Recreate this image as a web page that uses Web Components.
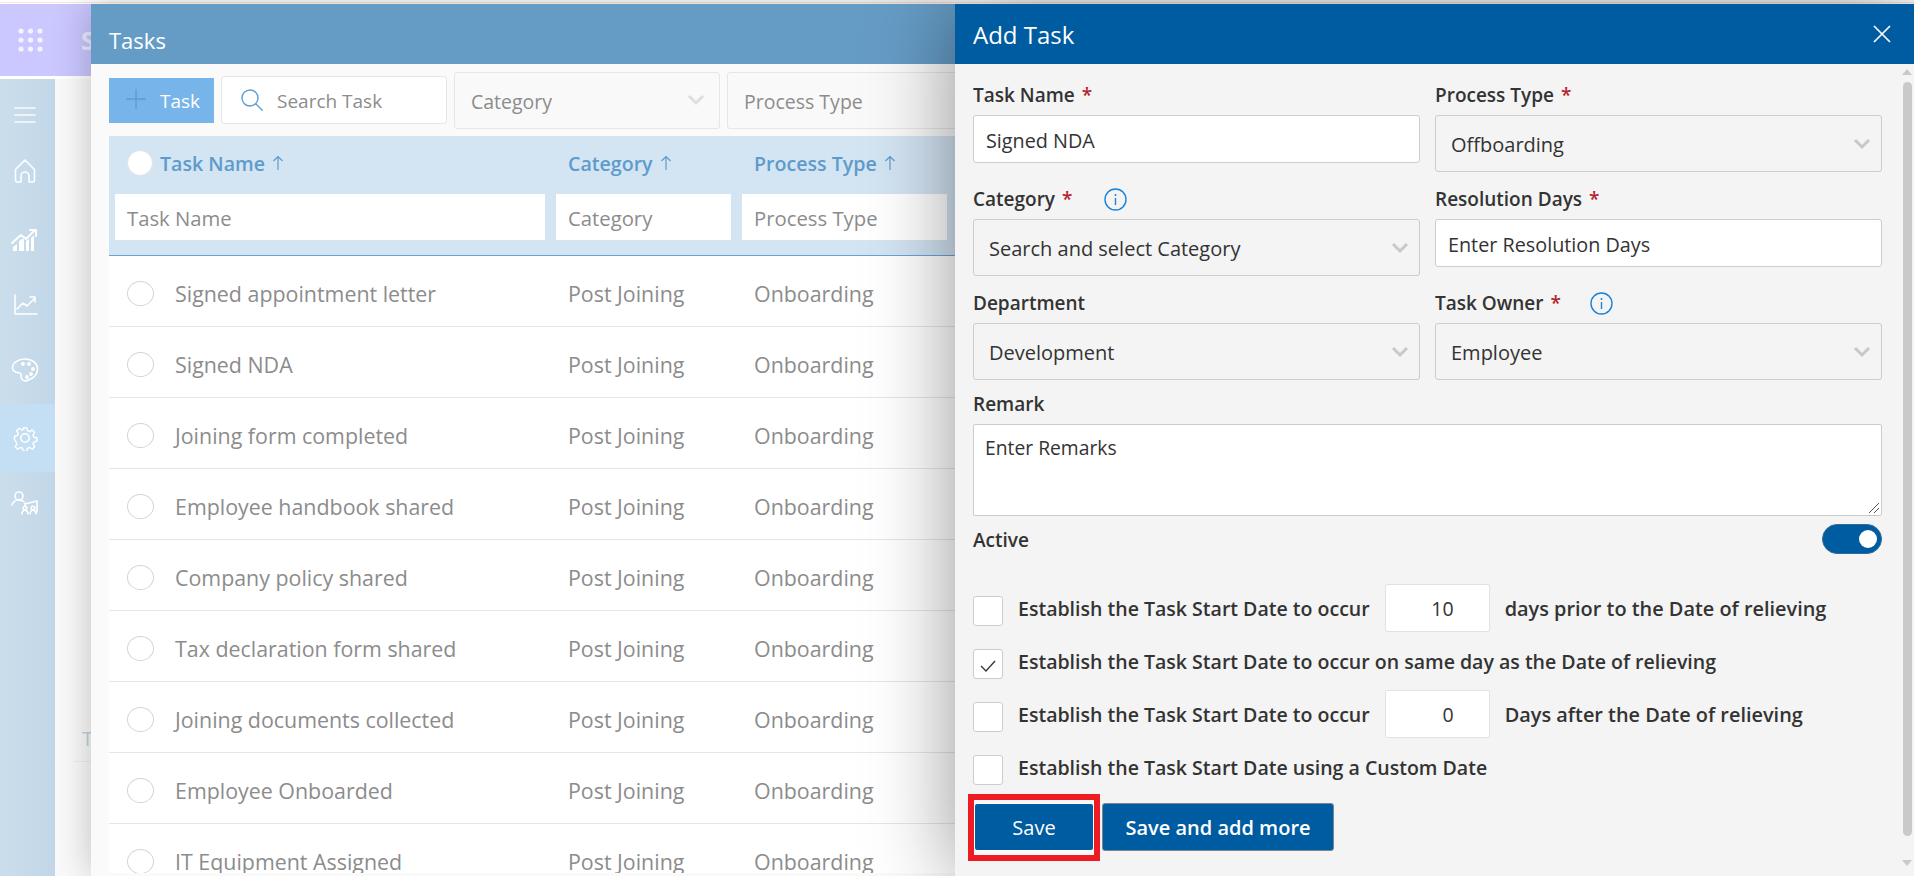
<!DOCTYPE html>
<html lang="en"><head><meta charset="utf-8"><title>Tasks</title>
<style>
html,body{margin:0;height:100%;overflow:hidden;background:#fff}
body{font-family:"Open Sans","Noto Sans",sans-serif;font-size:19px;color:#333}
app-shell{--cols:430px 175px 205px}
</style></head><body>
<app-shell>
  <app-topbar slot="top">S</app-topbar>
  <app-sidebar slot="side"></app-sidebar>
  <tasks-panel slot="panel">
    <task-row category="Post Joining" type="Onboarding">Signed appointment letter</task-row>
    <task-row category="Post Joining" type="Onboarding">Signed NDA</task-row>
    <task-row category="Post Joining" type="Onboarding">Joining form completed</task-row>
    <task-row category="Post Joining" type="Onboarding">Employee handbook shared</task-row>
    <task-row category="Post Joining" type="Onboarding">Company policy shared</task-row>
    <task-row category="Post Joining" type="Onboarding">Tax declaration form shared</task-row>
    <task-row category="Post Joining" type="Onboarding">Joining documents collected</task-row>
    <task-row category="Post Joining" type="Onboarding">Employee Onboarded</task-row>
    <task-row category="Post Joining" type="Onboarding">IT Equipment Assigned</task-row>
  </tasks-panel>
  <task-drawer slot="drawer"></task-drawer>
</app-shell>
<script>
function def(name, css, html, init){
  customElements.define(name, class extends HTMLElement{
    constructor(){super();const r=this.attachShadow({mode:'open'});
      const get=(a,d='')=>this.getAttribute(a)??d;
      r.innerHTML='<style>'+css+'</style>'+(typeof html==='function'?html(get):html);
      if(init)init(r,this);}
  });
}
const chev='<svg width="18" height="12" viewBox="0 0 18 12"><path d="M2 2l7 7 7-7" fill="none" stroke="currentColor" stroke-width="3"/></svg>';

def('app-shell',`
 :host{display:block;width:1914px;height:876px;position:relative;overflow:hidden;background:#fff}
 .strip{height:1px;margin:2px 0 1px;background:#fce8d8}
 .below{display:flex;height:797px;margin-top:3px}
 .content{flex:1;background:#fafafa;padding:0 0 0 19px;color:#c3d3e0}
 .t{display:block;margin:647px 0 0 8px;font-size:20px;line-height:26px}
 .ln{height:1px;background:#eee;margin-top:9px}
`,`<div class="strip"></div><slot name="top"></slot>
 <div class="below"><slot name="side"></slot><div class="content"><span class="t">T</span><div class="ln"></div></div></div>
 <slot name="panel"></slot><slot name="drawer"></slot>`);

def('app-topbar',`
 :host{display:flex;align-items:center;height:72px;background:linear-gradient(90deg,#cbc7ff,#c6c2fa);color:#eceaff;font-size:25px;font-weight:700}
 svg{margin-left:18px;flex:none}
 span{margin-left:37px}
`,`<svg width="26" height="26" viewBox="0 0 26 26" fill="#f3f2ff">
 ${[3,12.5,22].map(x=>[4,13,22].map(y=>`<circle cx="${x}" cy="${y}" r="2.6"/>`).join('')).join('')}</svg><span><slot></slot></span>`);

def('app-sidebar',`
 :host{display:flex;flex-direction:column;width:55px;flex:none;background:linear-gradient(90deg,#cbdeec,#c1d6e7);height:797px;box-sizing:border-box}
 .i{display:flex;align-items:center;justify-content:center;flex:none;height:67px;padding-right:5px;box-sizing:border-box}
 .i svg{fill:none;stroke:#fff;stroke-width:1.6;stroke-linecap:round;stroke-linejoin:round}
 .on{background:#c4dff3;height:68px}
`,`
 <div class="i" style="height:72px"><svg width="24" height="18" viewBox="0 0 24 18"><path d="M2 2h20M2 9h20M2 16h20" stroke-opacity=".9"/></svg></div>
 <div class="i" style="height:40px"><svg width="24" height="26" viewBox="0 0 24 26"><path d="M2.5 11.5L12 2l9.500 9.500V22a2 2 0 0 1-2 2H16v-6a4 4 0 0 0-8 0v6H4.500a2 2 0 0 1-2-2z"/></svg></div>
 <div class="i" style="height:97px"><svg width="28" height="24" viewBox="0 0 28 24"><path d="M1 15L10 7l5 4 8-8M19 2h6v6" stroke-width="2"/><path d="M2 23v-4l4-3v7zM8 23V13l4-2.500 1 1V23zM15 23V13l3-2v12zM20 23V10l3-3v16z" fill="#fff" stroke="none"/></svg></div>
 <div class="i" style="height:34px"><svg width="25" height="22" viewBox="0 0 25 22"><path d="M2 1v19h22"/><path d="M4 15l6-6 4 3 8-8M17 3h5v5"/></svg></div>
 <div class="i" style="height:82px;padding-top:14px"><svg width="28" height="26" viewBox="0 0 28 26"><path d="M14 2C7 2 1.500 6 1.500 11c0 4 4 4.500 7 5 3 .6 1 3 2 5.500 1 2.500 4 3 7 1.500 5.500-2 9-6 9-11C26.500 6 21 2 14 2z"/><circle cx="12" cy="7" r="1.100" fill="#fff"/><circle cx="18" cy="7" r="1.100" fill="#fff"/><circle cx="22" cy="12" r="1.100" fill="#fff"/><circle cx="20" cy="17" r="1.100" fill="#fff"/><circle cx="16" cy="20" r="1.100" fill="#fff"/></svg></div>
 <div class="i on"><svg width="26" height="26" viewBox="0 0 26 26"><circle cx="13" cy="13" r="4.200"/><path d="M11 1.500h4l.7 3.400 2.300 1 3-1.900 2.800 2.800-1.900 3 1 2.300 3.300.7v3.800l-3.300.7-1 2.300 1.900 3-2.800 2.800-3-1.900-2.300 1-.7 3.300h-4l-.7-3.300-2.300-1-3 1.900-2.800-2.800 1.900-3-1-2.300L1.300 15v-4l3.300-.7 1-2.300-1.900-3 2.800-2.800 3 1.900 2.300-1z" transform="translate(1.300 1.300) scale(.9)"/></svg></div>
 <div class="i" style="height:62px"><svg width="28" height="26" viewBox="0 0 28 26"><circle cx="8" cy="6" r="4"/><path d="M1 15c1-3 4-5 7-5 2 0 3 .5 4.500 1.500"/><path d="M14 14l12-3v11M14 13v3M11 24c0-2 1.500-4 3-4s3 2 3 4M19 24c0-2 1.500-4 3-4s3 2 3 4"/><circle cx="14" cy="18" r="1.800"/><circle cx="22" cy="18" r="1.800"/></svg></div>`);

def('sort-head',`
 :host{display:flex;align-items:center;gap:7px;padding-left:var(--pl,0);color:#5e9bca;font-weight:600;font-size:19.6px;line-height:26px;margin-top:-2px}
 svg{flex:none;margin-top:-3px}
`,`<slot></slot><svg width="12" height="16" viewBox="0 0 12 16"><path d="M6 15V1.500M1.500 6L6 1.500 10.500 6" fill="none" stroke="#5e9bca" stroke-width="1.200"/></svg>`);

def('tasks-panel',`
 :host{position:absolute;left:91px;top:4px;width:864px;height:872px;background:#fafafa;box-shadow:0 0 36px rgba(0,0,0,.24);display:flex;flex-direction:column;overflow:visible;color:#8c8c8c}
 header{height:60px;flex:none;background:#659cc6;color:#fff;font-size:22px;display:flex;align-items:center;padding:12px 18px 0;box-sizing:border-box;line-height:1}
 .bar{height:72px;flex:none;display:flex;align-items:center;gap:7px;padding-left:18px;overflow:hidden;font-size:19.5px}
 .bar span{position:relative;top:1px}
 .add{flex:none;width:105px;height:45px;background:#76b4e9;color:#fff;display:flex;align-items:center;box-sizing:border-box;padding-left:17px;gap:14px;font-size:19px}
 .search{flex:none;width:226px;height:48px;box-sizing:border-box;background:#fff;border:1px solid #e6e6e6;border-radius:3px;display:flex;align-items:center;padding-left:19px;gap:14px;font-size:19px}
 .sel{flex:none;height:57px;box-sizing:border-box;border:1px solid #e6e6e6;border-radius:3px;background:#f9f9f9;display:flex;align-items:center;justify-content:space-between;padding:0 14px 0 16px;color:#8c8c8c}
 .sel svg{color:#dedede}
 .table{margin-left:18px;flex:1;min-height:0;display:flex;flex-direction:column;background:#fff;overflow:hidden;margin-bottom:3px}
 .head{flex:none;height:120px;box-sizing:border-box;background:#d3e4f3;border-bottom:1px solid #6ba3d6;padding:0 6px}
 .hr,.fr{display:grid;grid-template-columns:var(--cols);column-gap:11px}
 .hr{height:58px;align-items:center}
 .hn{display:flex;align-items:center;gap:7px;padding-left:12px}
 .dot{width:26px;height:26px;border-radius:50%;background:#fff;border:1px solid #dde4ea;box-sizing:border-box;flex:none;margin-top:-4px}
 .fr{height:46px;font-size:20.3px}
 .f{background:#fff;display:flex;align-items:center;padding:1px 0 0 12px;color:#8c8c8c;box-sizing:border-box}
`,`<header><span>Tasks</span></header>
 <div class="bar">
  <div class="add"><svg width="20" height="20" viewBox="0 0 20 20" style="margin-top:-3px"><path d="M10 0v20M0 10h20" stroke="#5c9dd0" stroke-width="1.400"/></svg><span>Task</span></div>
  <div class="search"><svg width="22" height="22" viewBox="0 0 22 22"><circle cx="9" cy="9" r="8" fill="none" stroke="#5c9fd5" stroke-width="1.400"/><path d="M15 15l6.500 6.500" stroke="#5c9fd5" stroke-width="1.400"/></svg><span>Search Task</span></div>
  <div class="sel" style="width:266px"><span>Category</span>${chev}</div>
  <div class="sel" style="width:300px"><span>Process Type</span></div>
 </div>
 <div class="table">
  <div class="head">
   <div class="hr"><div class="hn"><span class="dot"></span><sort-head>Task Name</sort-head></div><sort-head style="--pl:12px">Category</sort-head><sort-head style="--pl:12px">Process Type</sort-head></div>
   <div class="fr"><div class="f">Task Name</div><div class="f">Category</div><div class="f">Process Type</div></div>
  </div>
  <slot></slot>
 </div>`);

def('task-row',`
 :host{display:grid;grid-template-columns:var(--cols);column-gap:11px;height:71px;flex:none;box-sizing:border-box;padding:5px 6px 0;border-bottom:1px solid #e6e6e6;align-items:center;color:#8c8c8c;background:#fff;font-size:21.4px}
 .n{display:flex;align-items:center;padding-left:12px;gap:21px}
 .c{width:27px;height:25px;border:1px solid #d4d4d4;border-radius:50%;box-sizing:border-box;flex:none}
 .p,.q{padding-left:12px}
`,g=>`<div class="n"><span class="c"></span><span><slot></slot></span></div><div class="p">${g('category')}</div><div class="q">${g('type')}</div>`);

def('field-label',`
 :host{display:flex;align-items:center;height:28px;margin-bottom:6px;font-weight:600;color:#333;font-size:19px;white-space:nowrap}
 .s{color:#b4232e;margin-left:7px;font-size:19px;line-height:1}
 svg{margin-left:var(--gap,22px)}
`,`<span><slot></slot></span><span class="s" id="s"></span><span id="i"></span>`,(r,h)=>{
  if(h.hasAttribute('req')) r.getElementById('s').textContent='*';
  if(h.hasAttribute('info')) r.getElementById('i').innerHTML='<svg width="23" height="23" viewBox="0 0 23 23" style="display:block"><circle cx="11.500" cy="11.500" r="10.500" fill="none" stroke="#1a83d8" stroke-width="1.400"/><path d="M11.500 10v7" stroke="#1a83d8" stroke-width="1.400"/><circle cx="11.500" cy="7" r="1" fill="#1a83d8"/></svg>';
});

def('form-input',`
 :host{display:flex;align-items:center;height:48px;box-sizing:border-box;background:#fff;border:1px solid #ccc;border-radius:3px;padding:2px 0 0 12px;color:#333;font-size:19.8px}
`,`<slot></slot>`);
def('form-select',`
 :host{display:flex;align-items:center;justify-content:space-between;height:57px;box-sizing:border-box;background:#f4f4f4;border:1px solid #ccc;border-radius:3px;padding:0 10px 0 15px;color:#333;font-size:20px}
 span{position:relative;top:1px}
 svg{color:#c8c8c8}
`,`<span><slot></slot></span>${chev}`);

def('date-rule',`
 :host{display:flex;height:53px;color:#333;font-weight:600;white-space:nowrap;font-size:19.55px}
 .b{width:30px;height:30px;box-sizing:border-box;border:1px solid #ccc;border-radius:3px;background:#fff;flex:none;margin-top:11.500px;display:flex;align-items:center;justify-content:center}
 .t{margin-left:15px;line-height:50px}
 .after{margin-left:15px;line-height:50px;font-size:19.9px}
 .num{width:105px;height:48px;box-sizing:border-box;background:#fff;border:1px solid #e2e2e2;border-radius:2px;margin-left:15px;text-align:right;padding-right:35px;line-height:48px;font-weight:400;flex:none}
`,`<span class="b" id="b"></span><span class="t"><slot></slot></span><span id="x" style="display:contents"></span>`,(r,h)=>{
  if(h.hasAttribute('checked')) r.getElementById('b').innerHTML='<svg width="16" height="14" viewBox="0 0 16 14" style="margin-top:4px"><path d="M1 7l5 5L15 2" fill="none" stroke="#333" stroke-width="1.300"/></svg>';
  if(h.hasAttribute('num')) r.getElementById('x').innerHTML=`<span class="num">${h.getAttribute('num')}</span><span class="after">${h.getAttribute('after')}</span>`;
});

def('ui-toggle',`
 :host{display:flex;width:60px;height:30px;box-sizing:border-box;background:#005ca1;border:1px solid #2f6b9b;border-radius:15px;align-items:center;justify-content:flex-end;padding-right:4px}
 i{display:block;width:18px;height:18px;border-radius:50%;background:#fff}
`,`<i></i>`);
def('ui-button',`
 :host{display:flex;align-items:center;justify-content:center;height:48px;box-sizing:border-box;background:#005ca1;color:#fff;border:1px solid #7a8793;border-radius:3px;font-weight:600;font-size:20px}
`,`<slot></slot>`);

def('task-drawer',`
 :host{position:absolute;left:955px;top:4px;width:959px;height:872px;background:#f4f4f4;box-shadow:0 0 80px rgba(0,0,0,.42);display:flex;flex-direction:column}
 header{height:60px;flex:none;background:#005ca1;color:#fff;font-size:24px;display:flex;align-items:center;justify-content:space-between;padding:0 23px 0 18px;box-sizing:border-box}
 .wrap{flex:1;min-height:0;display:flex}
 form{flex:none;width:909px;padding:17px 0 0 18px;display:block}
 .two{display:grid;grid-template-columns:447px 447px;column-gap:15px}
 .r1{height:104px}.r2{height:104px}.r3{height:101px}
 .remark{height:92px;box-sizing:border-box;background:#fff;border:1px solid #ccc;border-radius:2px;padding:9px 11px;color:#333;position:relative;font-size:19.3px}
 .remark svg{position:absolute;right:1px;bottom:1px}
 .active{display:flex;justify-content:space-between;align-items:center;height:30px;margin-top:8px;margin-bottom:30px;font-weight:600}
 .active span{position:relative;top:1px}
 .btns{display:flex;margin-top:-2px;align-items:flex-start}
 .hl{flex:none;width:132px;height:67px;box-sizing:border-box;border:6px solid #ed1c24;margin-left:-5px;padding:3px 0 0;background:#f7f7f7}
 .hl ui-button{width:120px;border-color:#fff;font-weight:400}
 .more{width:232px;margin:9px 0 0 2px}
 .sb{flex:none;width:10px;margin-left:20px;margin-right:2px;position:relative;display:flex;flex-direction:column;align-items:center;padding-top:5px}
 .sb b{display:block;width:0;height:0;border:5px solid transparent;border-bottom:6px solid #c9c9c9;border-top:0}
 .sb i{display:block;width:9px;height:754px;margin-top:7px;background:#c9c9c9;border-radius:5px}
 .sb u{display:block;width:0;height:0;border:5px solid transparent;border-top:6px solid #c9c9c9;border-bottom:0;margin-top:24px}
`,`<header><span>Add Task</span><svg width="18" height="18" viewBox="0 0 18 18"><path d="M1 1l16 16M17 1L1 17" stroke="#fff" stroke-width="1.700"/></svg></header>
 <div class="wrap"><form>
  <div class="two r1">
   <div><field-label req>Task Name</field-label><form-input>Signed NDA</form-input></div>
   <div><field-label req>Process Type</field-label><form-select>Offboarding</form-select></div>
  </div>
  <div class="two r2">
   <div><field-label req info style="--gap:32px">Category</field-label><form-select>Search and select Category</form-select></div>
   <div><field-label req>Resolution Days</field-label><form-input>Enter Resolution Days</form-input></div>
  </div>
  <div class="two r3">
   <div><field-label>Department</field-label><form-select>Development</form-select></div>
   <div><field-label req info style="--gap:29px">Task Owner</field-label><form-select>Employee</form-select></div>
  </div>
  <field-label>Remark</field-label>
  <div class="remark">Enter Remarks<svg width="12" height="12" viewBox="0 0 12 12"><path d="M1 11L11 1M6 11l5-5" stroke="#555" stroke-width="1"/></svg></div>
  <div class="active"><span>Active</span><ui-toggle></ui-toggle></div>
  <date-rule num="10" after="days prior to the Date of relieving">Establish the Task Start Date to occur</date-rule>
  <date-rule checked>Establish the Task Start Date to occur on same day as the Date of relieving</date-rule>
  <date-rule num="0" after="Days after the Date of relieving">Establish the Task Start Date to occur</date-rule>
  <date-rule>Establish the Task Start Date using a Custom Date</date-rule>
  <div class="btns"><div class="hl"><ui-button>Save</ui-button></div><ui-button class="more">Save and add more</ui-button></div>
 </form>
 <div class="sb"><b></b><i></i><u></u></div></div>`);
</script>
</body></html>
